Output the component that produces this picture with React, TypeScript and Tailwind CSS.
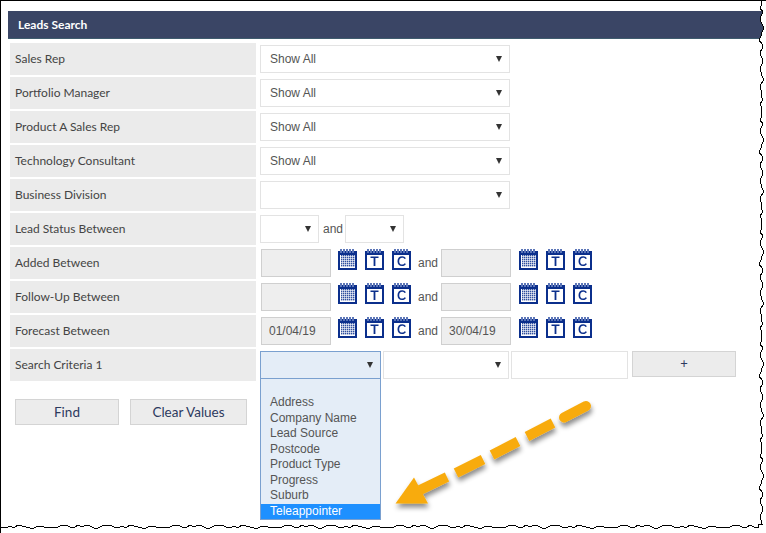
const labels = [
  'Sales Rep',
  'Portfolio Manager',
  'Product A Sales Rep',
  'Technology Consultant',
  'Business Division',
  'Lead Status Between',
  'Added Between',
  'Follow-Up Between',
  'Forecast Between',
  'Search Criteria 1',
];

const options = ['Address', 'Company Name', 'Lead Source', 'Postcode', 'Product Type', 'Progress', 'Suburb'];

const arial = "font-['Liberation_Sans',Arial,sans-serif]";

// wobbly screenshot edge: fixed offsets, repeated along each side
const wobble = [0, 1, -1, 2, 0, -1, 1, 3, 1, 0, -2, 1, 2, -1, 0, 2, 1, -1, 0, 1, 3, 0, -1, 1, 0, 2, -1, 1];

function tornEdge() {
  const pts: string[] = [];
  for (let y = 0, i = 0; y < 527; y += 4, i++) {
    pts.push(`${761 + wobble[i % wobble.length]},${y}`);
  }
  pts.push('759,524', '758,528');
  for (let x = 754, i = 0; x > 0; x -= 4, i++) {
    pts.push(`${x},${527 + (wobble[(i * 3) % wobble.length] > 1 ? -2 : wobble[(i * 3) % wobble.length])}`);
  }
  pts.push('0,527');
  return pts;
}

function Select({ value, className }: { value?: string; className: string }) {
  return (
    <div className={`flex h-[28px] items-center justify-between border border-[#e3e3e3] bg-white pl-[9px] pr-[7px] text-[12px] text-[#555] ${arial} ${className}`}>
      <span>{value}</span>
      <span className="h-0 w-0 border-x-[3px] border-t-[6px] border-x-transparent border-t-[#333]" />
    </div>
  );
}

function DateIcon({ kind }: { kind: 'cal' | 'T' | 'C' }) {
  return (
    <svg width="19" height="21" viewBox="0 0 19 21" className="shrink-0">
      <rect x="0" y="2" width="19" height="19" fill="#0b2f8c" />
      <rect x="2" y="6" width="15" height="13" fill="#fff" />
      {[2, 5, 8, 11, 14].map((x) => (
        <rect key={x} x={x} y="0" width="2" height="4" fill="#5c76b8" />
      ))}
      {kind === 'cal' ? (
        <g fill="#2f4f9f">
          {[6, 8, 10, 12, 14, 16].map((y) =>
            [3, 5, 7, 9, 11, 13, 15].map((x) => <rect key={`${x}-${y}`} x={x} y={y} width="1.4" height="1.4" />),
          )}
        </g>
      ) : kind === 'T' ? (
        <path d="M5.5 7.5h8v1.6h-3.1v7.9H8.6V9.1H5.5z" fill="#0b2f8c" />
      ) : (
        <path d="M14 9.2a4.6 4.6 0 0 0-3.9-1.9c-2.8 0-4.6 2-4.6 4.9s1.7 4.9 4.6 4.9c1.8 0 3.1-.8 3.9-2.1l-1.4-.8c-.5.9-1.3 1.4-2.5 1.4-1.8 0-2.9-1.3-2.9-3.4s1.1-3.4 2.9-3.4c1.1 0 1.9.5 2.4 1.2z" fill="#0b2f8c" />
      )}
    </svg>
  );
}

function DateField({ value, iconGap }: { value?: string; iconGap: string }) {
  return (
    <div className="flex items-center">
      <div className={`flex h-[28px] w-[70px] items-center border border-[#cfcfcf] bg-[#eeeeee] pl-[7px] text-[12px] text-[#555] ${arial}`}>
        {value}
      </div>
      <div className={`flex gap-[8px] pb-[8px] ${iconGap}`}>
        <DateIcon kind="cal" />
        <DateIcon kind="T" />
        <DateIcon kind="C" />
      </div>
    </div>
  );
}

function DateRange({ from, to }: { from?: string; to?: string }) {
  return (
    <div className="ml-[1px] flex items-center">
      <DateField value={from} iconGap="ml-[7px]" />
      <span className={`ml-[7px] mr-[4px] w-[19px] text-[12px] text-[#555] ${arial}`}>and</span>
      <DateField value={to} iconGap="ml-[8px]" />
    </div>
  );
}

function Fields({ index }: { index: number }) {
  if (index < 4) return <Select value="Show All" className="w-[250px]" />;
  if (index === 4) return <Select className="w-[250px]" />;
  if (index === 5)
    return (
      <div className="flex items-center">
        <Select className="w-[59px]" />
        <span className={`ml-[4px] mr-[2px] text-[12px] text-[#555] ${arial}`}>and</span>
        <Select className="w-[59px]" />
      </div>
    );
  if (index === 6 || index === 7) return <DateRange />;
  if (index === 8) return <DateRange from="01/04/19" to="30/04/19" />;
  return (
    <div className="flex items-start gap-[2px]">
      <div className="relative">
        <Select className="w-[121px] !border-[#7aa0cf] !bg-[#e4edf7]" />
        <div className={`absolute left-0 top-[28px] z-10 w-[121px] border border-t-0 border-[#7aa0cf] bg-[#e4edf7] pt-[16px] text-[12px] leading-[15.5px] text-[#555] ${arial}`}>
          {options.map((option) => (
            <div key={option} className="pl-[9px]">{option}</div>
          ))}
          <div className="bg-[#1e90ff] pl-[9px] text-white">Teleappointer</div>
        </div>
      </div>
      <Select className="w-[126px]" />
      <div className="h-[28px] w-[117px] border border-[#e3e3e3] bg-white" />
      <button className="ml-[2px] h-[26px] w-[104px] border border-[#d4d4d4] bg-[#ececec] text-[13px] text-[#2c3a5e]">+</button>
    </div>
  );
}

export default function App() {
  const edge = tornEdge();
  return (
    <div className="relative h-[533px] w-[766px] overflow-hidden border-l border-t border-black bg-white font-['Lato',sans-serif]">
      <div className="ml-[7px] mt-[10px] flex h-[28px] items-center border-b border-[#3f5c6e] bg-[#3a4565] pl-[10px] pt-[1px] text-[12px] font-bold text-white">
        Leads Search
      </div>
      <div className="ml-[9px] mt-[4px] flex flex-col gap-[2px]">
        {labels.map((label, i) => (
          <div key={label} className="flex h-[32px] items-center">
            <div className="flex h-full w-[246px] items-center bg-[#ebebeb] pl-[5px] text-[12px] text-[#444]">{label}</div>
            <div className="ml-[4px]">
              <Fields index={i} />
            </div>
          </div>
        ))}
      </div>
      <div className="ml-[14px] mt-[18px] flex gap-[11px] text-[13.5px] text-[#2c3a5e]">
        <button className="h-[26px] w-[104px] border border-[#d4d4d4] bg-[#ececec]">Find</button>
        <button className="h-[26px] w-[117px] border border-[#d4d4d4] bg-[#ececec]">Clear Values</button>
      </div>

      {/* dashed arrow over the dropdown */}
      <svg className="absolute left-[-1px] top-[-1px] z-20 h-[533px] w-[766px]" viewBox="0 0 766 533">
        <defs>
          <filter id="arrow-shadow" x="-20%" y="-20%" width="140%" height="150%">
            <feDropShadow dx="1" dy="4" stdDeviation="2.5" floodColor="#000" floodOpacity="0.45" />
          </filter>
        </defs>
        <g filter="url(#arrow-shadow)">
          <g stroke="#f8ab0d" strokeWidth="10" fill="none">
            <path d="M586 406 L564 417.5" strokeLinecap="round" />
            <path d="M553 423 L527 436.5" />
            <path d="M518 441.5 L492 455" />
            <path d="M483 459.5 L456 473" />
            <path d="M447 477 L420 490" />
          </g>
          <path d="M395.5 503.5 L414 477.5 L428 503.5 Z" fill="#f8ab0d" />
        </g>
      </svg>

      {/* torn paper edge of the screenshot */}
      <svg className="absolute left-[-1px] top-[-1px] z-30 h-[533px] w-[766px]" viewBox="0 0 766 533" shapeRendering="crispEdges">
        <polygon points={`${edge.join(' ')} 0,533 766,533 766,0`} fill="#fff" />
        <polyline points={edge.join(' ')} fill="none" stroke="#000" strokeWidth="1" />
      </svg>
    </div>
  );
}
